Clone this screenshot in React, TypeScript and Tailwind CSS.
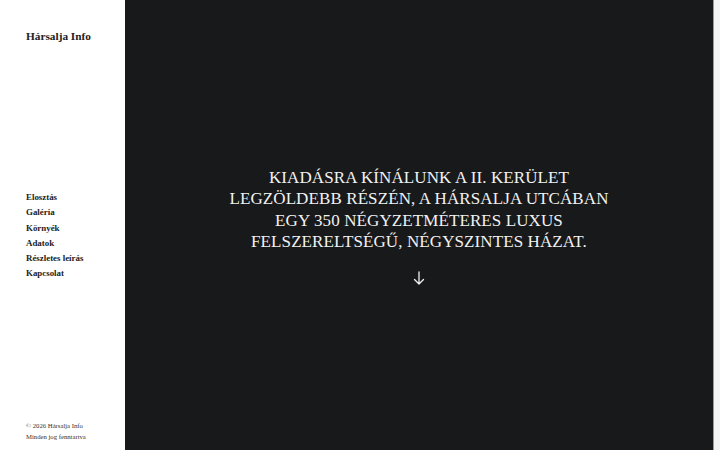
import React from "react";

const serif = { fontFamily: '"Liberation Serif", "DejaVu Serif", serif' };

export default function App() {
  const nav = ["Elosztás", "Galéria", "Környék", "Adatok", "Részletes leírás", "Kapcsolat"];
  return (
    <div className="flex h-[450px] w-[720px] overflow-hidden bg-white" style={serif}>
      <aside className="flex w-[125px] shrink-0 flex-col bg-white px-[26px] pt-[29px] pb-[8px] text-[#222]">
        <div className="text-[11.3px] font-bold leading-[14px]">Hársalja Info</div>
        <nav className="mt-[147px] flex flex-col">
          {nav.map((n) => (
            <a key={n} className="text-[8.9px] font-bold leading-[15.3px] text-[#222]">
              {n}
            </a>
          ))}
        </nav>
        <div className="mt-auto flex flex-col text-[6.7px] leading-[11px] text-[#333]">
          <span>© 2026 Hársalja Info</span>
          <span>Minden jog fenntartva</span>
        </div>
      </aside>
      <main className="flex flex-1 flex-col items-center justify-center bg-[#18191b] pt-[1px]">
        <h1 className="text-center text-[17px] font-normal uppercase leading-[21.5px] tracking-[0.1px] text-[#f2f2f2]">
          Kiadásra kínálunk a II. kerület
          <br />
          legzöldebb részén, a Hársalja utcában
          <br />
          egy 350 négyzetméteres luxus
          <br />
          felszereltségű, négyszintes házat.
        </h1>
        <svg className="mt-[18px]" width="12" height="14" viewBox="0 0 12 14" fill="none" stroke="#f2f2f2" strokeWidth="1.3" strokeLinecap="round" strokeLinejoin="round">
          <path d="M6 1v12M1.5 8.5L6 13l4.5-4.5" />
        </svg>
      </main>
      <div className="w-[7px] shrink-0 border-l border-[#9a9a9a] bg-[#f4f4f4]" />
    </div>
  );
}
